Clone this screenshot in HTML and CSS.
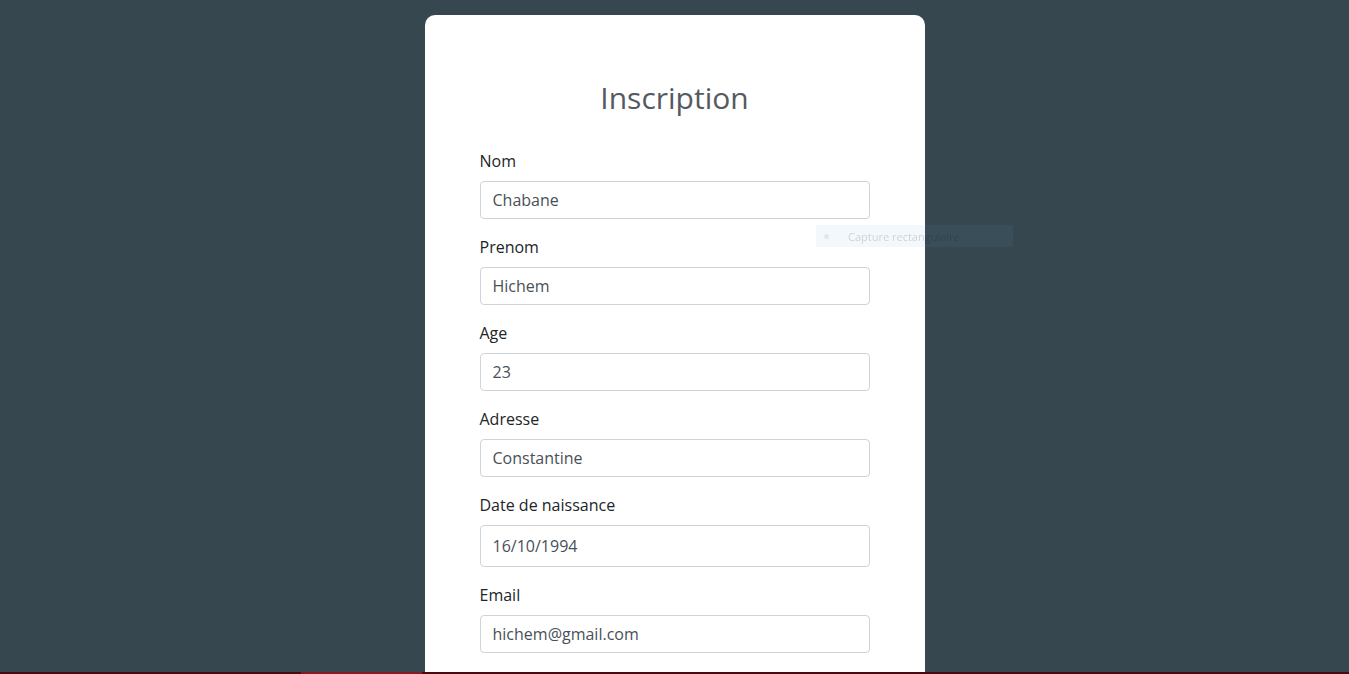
FILE: index.html
```html
<!DOCTYPE html>
<html lang="fr">
<head>
<meta charset="utf-8">
<title>Inscription</title>
<link rel="stylesheet" href="styles.css">
</head>
<body>
<main class="page">
  <form class="card">
    <h1 class="title">Inscription</h1>
    <div class="group">
      <label class="label">Nom</label>
      <input class="field" type="text" value="Chabane">
    </div>
    <div class="group">
      <label class="label">Prenom</label>
      <input class="field" type="text" value="Hichem">
    </div>
    <div class="group">
      <label class="label">Age</label>
      <input class="field" type="text" value="23">
    </div>
    <div class="group">
      <label class="label">Adresse</label>
      <input class="field" type="text" value="Constantine">
    </div>
    <div class="group">
      <label class="label">Date de naissance</label>
      <input class="field field-date" type="text" value="16/10/1994">
    </div>
    <div class="group">
      <label class="label">Email</label>
      <input class="field" type="text" value="hichem@gmail.com">
    </div>
  </form>
</main>
<div class="snip-tip"><span class="snip-dot"></span><span class="snip-text">Capture rectangulaire</span></div>
<div class="taskbar"><span class="taskbar-active"></span></div>
</body>
</html>
```
FILE: styles.css
```css
html, body {
  margin: 0;
  padding: 0;
  height: 100%;
  overflow: hidden;
}
body {
  background: #37474f;
  font-family: "Open Sans", "DejaVu Sans", sans-serif;
}
.page {
  display: flex;
  justify-content: center;
  padding-top: 15px;
}
.card {
  width: 500px;
  box-sizing: border-box;
  background: #fff;
  border-radius: 10px;
  padding: 64px 55px 40px;
  min-height: 700px;
}
.title {
  margin: 0 0 32px;
  font-size: 30px;
  line-height: 38px;
  font-weight: 400;
  color: #555a60;
  text-align: center;
}
.group {
  display: flex;
  flex-direction: column;
  margin-bottom: 16px;
}
.label {
  font-size: 16px;
  line-height: 24px;
  color: #212529;
  margin-bottom: 8px;
}
.field {
  box-sizing: border-box;
  height: 38px;
  width: 100%;
  padding: 6px 12px;
  font-family: "Open Sans", "DejaVu Sans", sans-serif;
  font-size: 16px;
  line-height: 24px;
  color: #495057;
  background: #fff;
  border: 1px solid #ced4da;
  border-radius: 4px;
  outline: none;
}
.field-date {
  height: 42px;
}
.snip-tip {
  position: fixed;
  left: 816px;
  top: 225px;
  width: 197px;
  height: 22px;
  display: flex;
  align-items: center;
  background: rgba(100, 160, 220, 0.08);
  font-family: "Open Sans", "DejaVu Sans", sans-serif;
  font-size: 11px;
  color: rgba(0, 0, 0, 0.16);
}
.snip-dot {
  width: 5px;
  height: 5px;
  border-radius: 50%;
  background: rgba(0, 0, 0, 0.07);
  margin: 0 19px 0 8px;
}
.taskbar {
  position: fixed;
  left: 0;
  right: 0;
  bottom: 0;
  height: 2px;
  background: #4d0a0e;
}
.taskbar-active {
  position: absolute;
  left: 301px;
  width: 121px;
  top: 0;
  height: 2px;
  background: #8a1a1f;
}
```
